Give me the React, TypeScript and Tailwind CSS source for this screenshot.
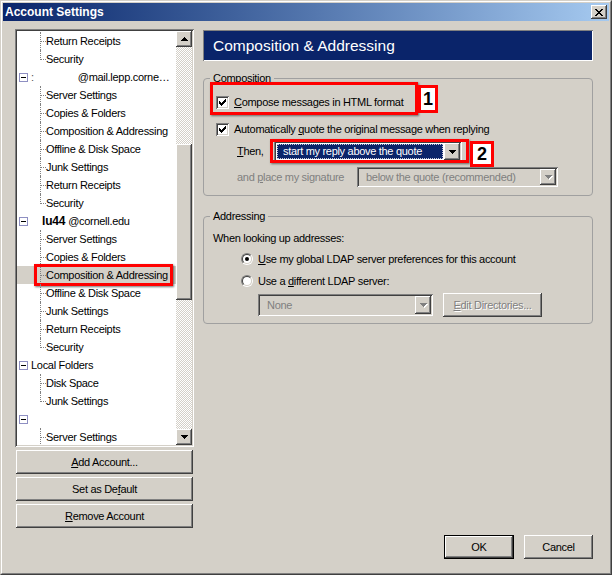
import React from 'react'

const raised =
  'bg-[#d4d0c8] shadow-[inset_-1px_-1px_#404040,inset_1px_1px_#ffffff,inset_-2px_-2px_#808080,inset_2px_2px_#d4d0c8]'
const sunken =
  'shadow-[inset_1px_1px_#808080,inset_-1px_-1px_#ffffff,inset_2px_2px_#404040,inset_-2px_-2px_#d4d0c8]'

function ArrowDown({ color = '#000000', up = false }: { color?: string; up?: boolean }) {
  return (
    <svg width="7" height="4" viewBox="0 0 7 4" shapeRendering="crispEdges" className={up ? 'rotate-180' : ''}>
      <path fill={color} d="M0 0h7v1h-7zM1 1h5v1h-5zM2 2h3v1h-3zM3 3h1v1h-1z" />
    </svg>
  )
}

function Checkbox() {
  return (
    <span className={`w-[13px] h-[13px] bg-white ${sunken} flex items-center justify-center shrink-0`}>
      <svg width="7" height="7" viewBox="0 0 7 7" shapeRendering="crispEdges">
        <path
          fill="#000"
          d="M6 0h1v1h-1zM5 1h2v1h-2zM0 2h1v1h-1zM4 2h3v1h-3zM0 3h2v1h-2zM3 3h3v1h-3zM0 4h5v1h-5zM1 5h3v1h-3zM2 6h1v1h-1z"
        />
      </svg>
    </span>
  )
}

function Radio({ checked }: { checked?: boolean }) {
  return (
    <span className="w-[12px] h-[12px] rounded-full border border-t-[#808080] border-l-[#808080] border-r-white border-b-white shrink-0 flex">
      <span className="flex-1 rounded-full border border-t-[#404040] border-l-[#404040] border-r-[#d4d0c8] border-b-[#d4d0c8] bg-white flex items-center justify-center">
        {checked && <span className="w-[4px] h-[4px] rounded-full bg-black" />}
      </span>
    </span>
  )
}

function MinusBox() {
  return (
    <span className="ml-[2px] w-[9px] h-[9px] border border-[#8e8fc2] bg-white flex items-center justify-center shrink-0">
      <span className="w-[5px] h-px bg-black" />
    </span>
  )
}

type TreeRow =
  | { kind: 'child'; label: string; last?: boolean; selected?: boolean }
  | { kind: 'account'; id: 'mail' | 'lu44' | 'local' | 'blank' }

const rows: TreeRow[] = [
  { kind: 'child', label: 'Return Receipts' },
  { kind: 'child', label: 'Security', last: true },
  { kind: 'account', id: 'mail' },
  { kind: 'child', label: 'Server Settings' },
  { kind: 'child', label: 'Copies & Folders' },
  { kind: 'child', label: 'Composition & Addressing' },
  { kind: 'child', label: 'Offline & Disk Space' },
  { kind: 'child', label: 'Junk Settings' },
  { kind: 'child', label: 'Return Receipts' },
  { kind: 'child', label: 'Security', last: true },
  { kind: 'account', id: 'lu44' },
  { kind: 'child', label: 'Server Settings' },
  { kind: 'child', label: 'Copies & Folders' },
  { kind: 'child', label: 'Composition & Addressing', selected: true },
  { kind: 'child', label: 'Offline & Disk Space' },
  { kind: 'child', label: 'Junk Settings' },
  { kind: 'child', label: 'Return Receipts' },
  { kind: 'child', label: 'Security', last: true },
  { kind: 'account', id: 'local' },
  { kind: 'child', label: 'Disk Space' },
  { kind: 'child', label: 'Junk Settings', last: true },
  { kind: 'account', id: 'blank' },
  { kind: 'child', label: 'Server Settings' },
  { kind: 'child', label: 'Copies & Folders' },
]

function Row({ row }: { row: TreeRow }) {
  if (row.kind === 'account') {
    return (
      <div className="h-[18px] flex items-center whitespace-nowrap">
        <MinusBox />
        {row.id === 'mail' && (
          <>
            <span className="ml-[3px] text-[#555]">:</span>
            <span className="ml-[44px]">@mail.lepp.corne…</span>
          </>
        )}
        {row.id === 'lu44' && (
          <>
            <span className="ml-[14px] font-bold text-[12px] tracking-[-0.2px]">lu44</span>
            <span className="ml-[3px]">@cornell.edu</span>
          </>
        )}
        {row.id === 'local' && <span className="ml-[3px]">Local Folders</span>}
      </div>
    )
  }
  return (
    <div className={`relative h-[18px] flex items-center whitespace-nowrap ${row.selected ? 'bg-[#d4d0c8]' : ''}`}>
      <span className="relative ml-[23px] w-[6px] self-stretch shrink-0">
        <span
          className={`absolute left-0 top-0 border-l border-dotted border-[#808080] ${row.last ? 'h-[10px]' : 'h-full'}`}
        />
        <span className="absolute left-[1px] top-[9px] w-[5px] border-t border-dotted border-[#808080]" />
      </span>
      <span>{row.label}</span>
      {row.selected && (
        <span className="absolute left-[17px] top-[-2px] w-[139px] h-[22px] border-[3px] border-[#ff0000] shadow-[1px_1px_2px_rgba(0,0,0,0.55)]" />
      )}
    </div>
  )
}

function Dropdown({
  text,
  width,
  height,
  active,
}: {
  text: string
  width: string
  height: string
  active?: boolean
}) {
  return (
    <div className={`${width} ${height} ${sunken} p-[2px] flex shrink-0 ${active ? 'bg-white' : 'bg-[#d4d0c8]'}`}>
      {active ? (
        <div className="flex-1 m-px bg-[#0a246a] border border-dotted border-[#c8c8d8] flex items-center pl-[5px] text-white whitespace-nowrap">
          {text}
        </div>
      ) : (
        <div className="flex-1 flex items-center pl-[7px] text-[#808080] whitespace-nowrap">{text}</div>
      )}
      <div className={`w-[16px] ${raised} flex items-center justify-center`}>
        {active ? (
          <ArrowDown />
        ) : (
          <span className="relative flex">
            <span className="absolute left-px top-px">
              <ArrowDown color="#ffffff" />
            </span>
            <span className="relative">
              <ArrowDown color="#808080" />
            </span>
          </span>
        )}
      </div>
    </div>
  )
}

function Button({ children, className = '' }: { children: React.ReactNode; className?: string }) {
  return <div className={`${raised} flex items-center justify-center ${className}`}>{children}</div>
}

export default function App() {
  return (
    <div className="w-[612px] h-[575px] bg-[#d4d0c8] border border-t-[#d4d0c8] border-l-[#d4d0c8] border-r-[#404040] border-b-[#404040] text-[11px] leading-[13px] tracking-[-0.3px] text-black font-['Liberation_Sans',Arial,sans-serif] select-none">
      <div className="h-full border border-t-white border-l-white border-r-[#808080] border-b-[#808080] p-px flex flex-col">
        {/* title bar */}
        <div className="h-[18px] shrink-0 flex items-center justify-between bg-linear-to-r from-[#0a246a] to-[#a6caf0] px-[2px]">
          <span className="text-white font-bold text-[12px] tracking-normal">Account Settings</span>
          <div className={`w-[16px] h-[14px] ${raised} flex items-center justify-center`}>
            <svg width="8" height="7" viewBox="0 0 8 7" shapeRendering="crispEdges">
              <path
                fill="#000"
                d="M0 0h2v1h-2zM6 0h2v1h-2zM1 1h2v1h-2zM5 1h2v1h-2zM2 2h4v1h-4zM3 3h2v1h-2zM2 4h4v1h-4zM1 5h2v1h-2zM5 5h2v1h-2zM0 6h2v1h-2zM6 6h2v1h-2z"
              />
            </svg>
          </div>
        </div>

        <div className="flex flex-1 min-h-0 pl-[12px] pt-[8px]">
          {/* left column */}
          <div className="w-[179px] flex flex-col shrink-0">
            <div className={`h-[418px] bg-white ${sunken} p-[2px] flex`}>
              <div className="flex-1 overflow-hidden pt-px">
                {rows.map((r, i) => (
                  <Row key={i} row={r} />
                ))}
              </div>
              <div className="w-[16px] flex flex-col">
                <div className={`h-[16px] ${raised} flex items-center justify-center`}>
                  <ArrowDown up />
                </div>
                <div className="flex-1 flex flex-col bg-[image:repeating-conic-gradient(#ffffff_0_25%,#d4d0c8_0_50%)] bg-[length:2px_2px]">
                  <div className="h-[97px]" />
                  <div className={`h-[156px] ${raised}`} />
                </div>
                <div className={`h-[16px] ${raised} flex items-center justify-center`}>
                  <ArrowDown />
                </div>
              </div>
            </div>
            <div className="mt-[3px] flex flex-col gap-[3px]">
              <Button className="ml-px w-[177px] h-[24px]">
                <span>
                  <span className="underline">A</span>dd Account...
                </span>
              </Button>
              <Button className="ml-px w-[177px] h-[24px]">
                <span>
                  Set as De<span className="underline">f</span>ault
                </span>
              </Button>
              <Button className="ml-px w-[177px] h-[24px]">
                <span>
                  <span className="underline">R</span>emove Account
                </span>
              </Button>
            </div>
          </div>

          {/* right column */}
          <div className="ml-[9px] w-[390px] flex flex-col pb-[13px]">
            <div className="mt-px h-[31px] shrink-0 bg-[#0a246a] shadow-[inset_1px_1px_#808080,inset_-1px_-1px_#ffffff] flex items-center pl-[10px] text-white text-[15.5px] leading-[18px] tracking-normal">
              Composition &amp; Addressing
            </div>

            <fieldset className="mt-[11px] border border-[#a0a0a0] rounded-[4px] pb-[8px]">
              <legend className="ml-[6px] px-[3px] leading-[13px]">Composition</legend>

              <div className="relative mt-[9px] h-[16px] flex items-center pl-[12px]">
                <Checkbox />
                <span className="ml-[5px]">
                  <span className="underline">C</span>ompose messages in HTML format
                </span>
                <span className="absolute left-[6px] top-[-12px] w-[208px] h-[33px] border-[3px] border-[#ff0000] shadow-[1px_1px_2px_rgba(0,0,0,0.5)]" />
                <span className="absolute left-[214px] top-[-9px] w-[20px] h-[28px] bg-white border-[3px] border-[#ff0000] flex items-center justify-center font-bold text-[18px] leading-none tracking-normal">
                  1
                </span>
              </div>

              <div className="mt-[11px] h-[16px] flex items-center pl-[12px]">
                <Checkbox />
                <span className="ml-[5px]">
                  Automatically <span className="underline">q</span>uote the original message when replying
                </span>
              </div>

              <div className="relative mt-[4px] h-[21px] flex items-center pl-[33px]">
                <span className="w-[37px]">
                  <span className="underline">T</span>hen,
                </span>
                <Dropdown text="start my reply above the quote" width="w-[188px]" height="h-[21px]" active />
                <span className="absolute left-[66px] top-[-2px] w-[199px] h-[24px] border-[3px] border-[#ff0000] shadow-[1px_1px_2px_rgba(0,0,0,0.5)]" />
                <span className="absolute left-[266px] top-0 w-[24px] h-[26px] bg-white border-[3px] border-[#ff0000] flex items-center justify-center font-bold text-[18px] leading-none tracking-normal">
                  2
                </span>
              </div>

              <div className="mt-[5px] h-[20px] flex items-center pl-[33px]">
                <span className="w-[120px] text-[#808080]">
                  and <span className="underline">p</span>lace my signature
                </span>
                <Dropdown text="below the quote (recommended)" width="w-[201px]" height="h-[20px]" />
              </div>
            </fieldset>

            <fieldset className="mt-[14px] border border-[#a0a0a0] rounded-[4px] pb-[6px]">
              <legend className="ml-[6px] px-[3px] leading-[13px]">Addressing</legend>

              <div className="mt-[8px] h-[14px] flex items-center pl-[9px]">When looking up addresses:</div>

              <div className="mt-[6px] h-[16px] flex items-center pl-[37px]">
                <Radio checked />
                <span className="ml-[5px]">
                  <span className="underline">U</span>se my global LDAP server preferences for this account
                </span>
              </div>

              <div className="mt-[6px] h-[16px] flex items-center pl-[37px]">
                <Radio />
                <span className="ml-[5px]">
                  Use a <span className="underline">d</span>ifferent LDAP server:
                </span>
              </div>

              <div className="mt-[4px] h-[24px] flex items-center pl-[54px]">
                <Dropdown text="None" width="w-[175px]" height="h-[22px]" />
                <Button className="ml-[10px] w-[99px] h-[24px]">
                  <span className="text-[#808080] [text-shadow:1px_1px_0_#ffffff]">
                    <span className="underline">E</span>dit Directories...
                  </span>
                </Button>
              </div>
            </fieldset>

            <div className="mt-auto flex justify-end gap-[10px]">
              <div className="w-[70px] h-[24px] border border-black flex">
                <Button className="flex-1">OK</Button>
              </div>
              <Button className="w-[69px] h-[24px]">Cancel</Button>
            </div>
          </div>
        </div>
      </div>
    </div>
  )
}
